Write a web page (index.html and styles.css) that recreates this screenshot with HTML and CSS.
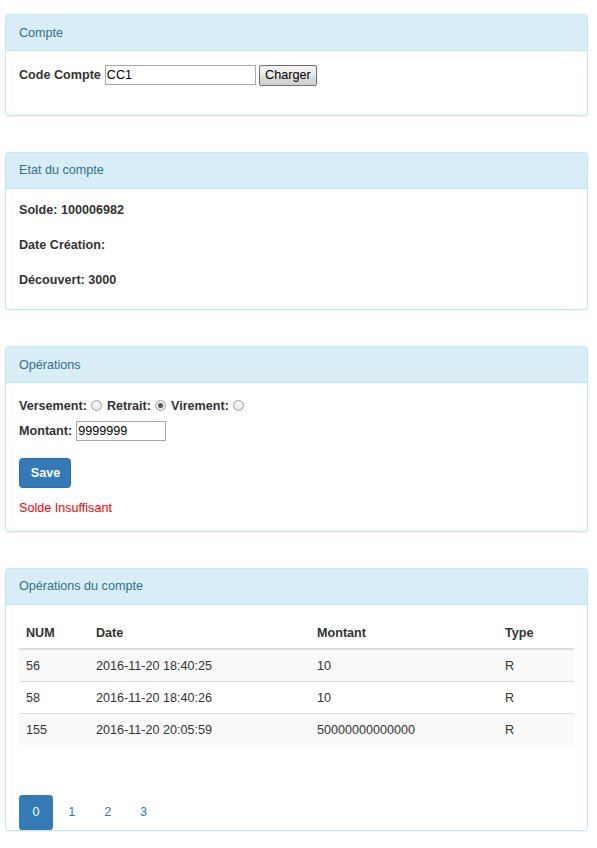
FILE: index.html
```html
<!DOCTYPE html>
<html lang="fr">
<head>
<meta charset="utf-8">
<title>Banque</title>
<link rel="stylesheet" href="styles.css">
</head>
<body>
<div class="page">
  <div class="panel">
    <div class="panel-heading">Compte</div>
    <div class="panel-body body-compte">
      <div class="row-form">
        <label class="lbl">Code Compte</label>
        <input class="field field-code" type="text" value="CC1">
        <button class="btn-default" type="button">Charger</button>
      </div>
    </div>
  </div>

  <div class="panel">
    <div class="panel-heading">Etat du compte</div>
    <div class="panel-body body-etat">
      <div class="info">Solde: 100006982</div>
      <div class="info">Date Création:</div>
      <div class="info">Découvert: 3000</div>
    </div>
  </div>

  <div class="panel">
    <div class="panel-heading">Opérations</div>
    <div class="panel-body body-ops">
      <div class="row-radios">
        <span class="lbl">Versement:</span><span class="radio"></span>
        <span class="lbl">Retrait:</span><span class="radio checked"></span>
        <span class="lbl">Virement:</span><span class="radio"></span>
      </div>
      <div class="row-montant">
        <span class="lbl">Montant:</span>
        <input class="field field-montant" type="text" value="9999999">
      </div>
      <button class="btn-primary" type="button">Save</button>
      <div class="error">Solde Insuffisant</div>
    </div>
  </div>

  <div class="panel">
    <div class="panel-heading">Opérations du compte</div>
    <div class="panel-body body-table">
      <table class="table">
        <thead>
          <tr><th class="c-num">NUM</th><th class="c-date">Date</th><th class="c-mnt">Montant</th><th class="c-type">Type</th></tr>
        </thead>
        <tbody>
          <tr class="odd"><td>56</td><td>2016-11-20 18:40:25</td><td>10</td><td>R</td></tr>
          <tr><td>58</td><td>2016-11-20 18:40:26</td><td>10</td><td>R</td></tr>
          <tr class="odd"><td>155</td><td>2016-11-20 20:05:59</td><td>50000000000000</td><td>R</td></tr>
        </tbody>
      </table>
    </div>
    <ul class="pills">
      <li><a class="active">0</a></li>
      <li><a>1</a></li>
      <li><a>2</a></li>
      <li><a>3</a></li>
    </ul>
  </div>
</div>
</body>
</html>
```

FILE: styles.css
```css
html, body {
  margin: 0;
  padding: 0;
  background: #fff;
}
body {
  font-family: "Liberation Sans", Arial, sans-serif;
  font-size: 12.6px;
  line-height: 18px;
  color: #333;
}
.page {
  padding: 14px 9px 0 5px;
}
.panel {
  border: 1px solid #bce8f1;
  border-radius: 3.6px;
  box-shadow: 0 1px 1px rgba(0, 0, 0, 0.05);
  margin-bottom: 36px;
  background: #fff;
}
.panel-heading {
  background: #d9edf7;
  color: #31708f;
  border-bottom: 1px solid #bce8f1;
  border-radius: 2.6px 2.6px 0 0;
  padding: 8.5px 13px;
  line-height: 18px;
}
.panel-body {
  padding: 13.5px 13px;
}
.lbl {
  font-weight: bold;
}
.body-compte {
  padding-bottom: 13px;
}
.row-form {
  display: flex;
  align-items: center;
  height: 21px;
  margin-bottom: 16px;
}
.field {
  font-family: "Liberation Sans", Arial, sans-serif;
  font-size: 12.6px;
  color: #000;
  border: 1px solid #a9a9a9;
  padding: 0 1px;
  height: 20px;
  box-sizing: border-box;
  margin: 0;
  outline: none;
  background: #fff;
}
.field-code {
  width: 151px;
  margin-left: 4px;
}
.btn-default {
  font-family: "Liberation Sans", Arial, sans-serif;
  font-size: 12.6px;
  color: #000;
  height: 21px;
  width: 58px;
  margin-left: 3px;
  padding: 0;
  border: 1px solid #707070;
  border-radius: 2px;
  background: linear-gradient(#f2f2f2, #ebebeb 50%, #dddddd 51%, #cfcfcf);
}
.body-etat {
  padding-top: 12.5px;
  padding-bottom: 20px;
}
.info {
  font-weight: bold;
  line-height: 18px;
  margin-bottom: 17px;
}
.info:last-child {
  margin-bottom: 0;
}
.body-ops {
  padding-bottom: 14px;
}
.row-radios {
  display: flex;
  align-items: center;
  height: 18px;
}
.radio {
  display: inline-block;
  width: 11px;
  height: 11px;
  box-sizing: border-box;
  border-radius: 50%;
  border: 1px solid #a6a6a6;
  background: radial-gradient(circle at 50% 40%, #fbfbfb, #dcdcdc);
  margin: 0 5px 0 4px;
  position: relative;
}
.radio.checked::after {
  content: "";
  position: absolute;
  left: 2px;
  top: 2px;
  width: 5px;
  height: 5px;
  border-radius: 50%;
  background: #555;
}
.row-montant {
  display: flex;
  align-items: center;
  height: 22px;
  margin-top: 5px;
}
.field-montant {
  width: 90px;
  margin-left: 4px;
}
.btn-primary {
  display: block;
  margin-top: 16px;
  font-family: "Liberation Sans", Arial, sans-serif;
  font-size: 12.6px;
  font-weight: bold;
  line-height: 18px;
  color: #fff;
  background: #337ab7;
  border: 1px solid #2e6da4;
  border-radius: 3.6px;
  padding: 5.4px 10.8px;
  height: 30px;
  width: 52px;
}
.error {
  color: #ff0000;
  margin-top: 11px;
}
.body-table {
  padding-bottom: 13.5px;
}
.table {
  width: 100%;
  border-collapse: collapse;
  border-spacing: 0;
  margin-bottom: 18px;
}
.table th, .table td {
  text-align: left;
  padding: 7px 7px 7px;
  line-height: 18px;
  vertical-align: top;
}
.table th {
  font-weight: bold;
  padding-top: 6px;
  padding-bottom: 6px;
  border-bottom: 2px solid #ddd;
}
.table td {
  border-top: 1px solid #ddd;
  padding-bottom: 6px;
}
.table tbody tr:first-child td {
  border-top: 0;
}
.table tr.odd td {
  background: #f9f9f9;
}
.c-num { width: 56px; }
.c-date { width: 207px; }
.c-mnt { width: 174px; }
.pills {
  list-style: none;
  margin: 18px 0 0 13px;
  padding: 0;
  display: flex;
}
.pills li {
  margin-right: 1.8px;
}
.pills a {
  display: block;
  padding: 8.5px 13.5px;
  line-height: 18px;
  color: #337ab7;
  border-radius: 3.6px;
}
.pills a.active {
  background: #337ab7;
  color: #fff;
}
```
